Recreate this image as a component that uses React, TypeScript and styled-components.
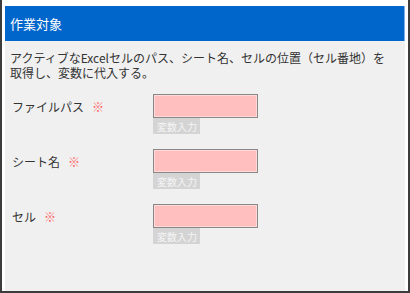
import React from 'react';
import styled, { createGlobalStyle } from 'styled-components';

const GlobalStyle = createGlobalStyle`
  html, body {
    margin: 0;
    padding: 0;
    background: #ffffff;
  }
  body {
    font-family: "Noto Sans CJK JP", "Noto Sans", sans-serif;
  }
`;

interface Field {
  label: string;
}

const fields: Field[] = [
  { label: 'ファイルパス' },
  { label: 'シート名' },
  { label: 'セル' },
];

export default function App() {
  return (
    <>
      <GlobalStyle />
      <Frame>
        <Panel>
          <Header>作業対象</Header>
          <Description>
            アクティブなExcelセルのパス、シート名、セルの位置（セル番地）を取得し、変数に代入する。
          </Description>
          <FieldList>
            {fields.map((field) => (
              <FieldRow key={field.label}>
                <Label>
                  {field.label}
                  <Required>※</Required>
                </Label>
                <InputBlock>
                  <InputBox />
                  <VarTag>変数入力</VarTag>
                </InputBlock>
              </FieldRow>
            ))}
          </FieldList>
        </Panel>
      </Frame>
    </>
  );
}

const Frame = styled.div`
  width: 410px;
  height: 293px;
  box-sizing: border-box;
  display: flex;
  padding: 6px 3px 0 3px;
  background: #ffffff;
  border-left: 2px solid #3c3c3c;
  border-right: 2px solid #3c3c3c;
  border-bottom: 2px solid #3c3c3c;
`;

const Panel = styled.div`
  flex: 1;
  display: flex;
  flex-direction: column;
  background: #f0f0f0;
`;

const Header = styled.div`
  height: 35px;
  display: flex;
  align-items: center;
  padding-left: 5px;
  background: #0066cc;
  color: #ffffff;
  font-size: 13px;
  border-right: 1px solid #7fb0e6;
`;

const Description = styled.div`
  padding: 9px 10px 0 5px;
  font-size: 12px;
  line-height: 15px;
  color: #333333;
`;

const FieldList = styled.div`
  display: flex;
  flex-direction: column;
  gap: 15px;
  padding-top: 14px;
`;

const FieldRow = styled.div`
  display: grid;
  grid-template-columns: 148px 1fr;
  align-items: start;
`;

const Label = styled.div`
  height: 24px;
  display: flex;
  align-items: center;
  padding-left: 7px;
  font-size: 12px;
  color: #333333;
`;

const Required = styled.span`
  margin-left: 8px;
  color: #ff5c5c;
  font-size: 12px;
`;

const InputBlock = styled.div`
  display: flex;
  flex-direction: column;
  align-items: flex-start;
`;

const InputBox = styled.div`
  width: 105px;
  height: 24px;
  box-sizing: border-box;
  border: 1px solid #888888;
  background: #ffbfbf;
  box-shadow: inset 0 0 0 1px #ffd8d8;
`;

const VarTag = styled.div`
  width: 47px;
  height: 16px;
  box-sizing: border-box;
  padding-left: 4px;
  display: flex;
  align-items: center;
  background: #d4d4d4;
  color: #f4f4f4;
  font-size: 10px;
`;
